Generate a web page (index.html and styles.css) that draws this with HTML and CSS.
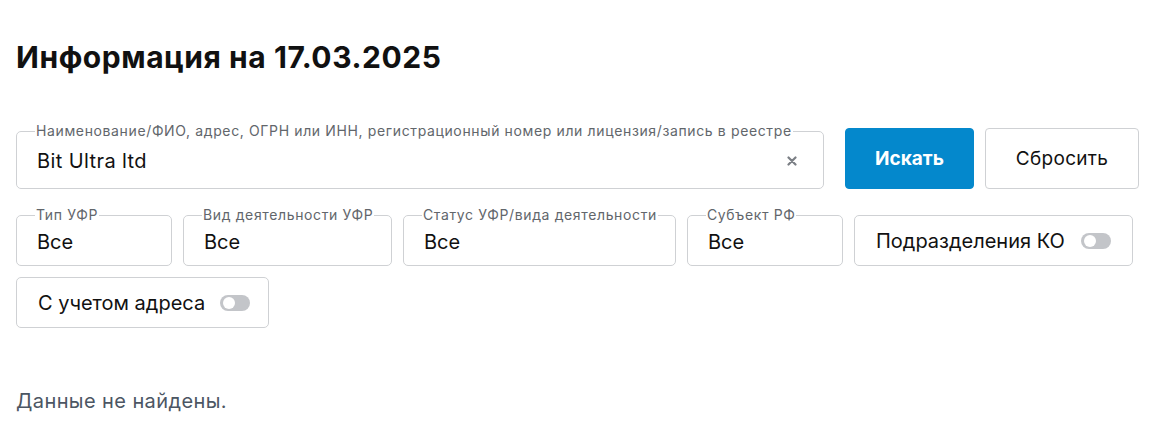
FILE: index.html
```html
<!DOCTYPE html>
<html lang="ru">
<head>
<meta charset="utf-8">
<link rel="stylesheet" href="styles.css">
</head>
<body>
<main class="page">
  <h1 class="title">Информация на 17.03.2025</h1>
  <form class="search">
    <div class="search-row">
      <fieldset class="field field-main">
        <legend>Наименование/ФИО, адрес, ОГРН или ИНН, регистрационный номер или лицензия/запись в реестре</legend>
        <span class="value value-latin">Bit Ultra ltd</span>
        <span class="clear"><svg width="10" height="10" viewBox="0 0 10 10"><path d="M1.5 1.5 L8.5 8.5 M8.5 1.5 L1.5 8.5" stroke="#7b7f85" stroke-width="2.2" stroke-linecap="round"/></svg></span>
      </fieldset>
      <button type="button" class="btn btn-primary">Искать</button>
      <button type="button" class="btn btn-secondary">Сбросить</button>
    </div>
    <div class="filters">
      <fieldset class="field f-type"><legend>Тип УФР</legend><span class="value">Все</span></fieldset>
      <fieldset class="field f-activity"><legend>Вид деятельности УФР</legend><span class="value">Все</span></fieldset>
      <fieldset class="field f-status"><legend>Статус УФР/вида деятельности</legend><span class="value">Все</span></fieldset>
      <fieldset class="field f-region"><legend>Субъект РФ</legend><span class="value">Все</span></fieldset>
      <div class="switch-box f-ko"><span class="value">Подразделения КО</span><span class="toggle"></span></div>
      <div class="switch-box f-addr"><span class="value">С учетом адреса</span><span class="toggle"></span></div>
    </div>
  </form>
  <p class="empty">Данные не найдены.</p>
</main>
</body>
</html>
```
FILE: styles.css
```css
* { box-sizing: border-box; }
html, body { margin: 0; background: #fff; }
body {
  font-family: Inter, "Noto Sans", "Liberation Sans", sans-serif;
  color: #111;
}
.page { padding: 0 25px 0 16px; width: 1164px; }
.title {
  margin: 0;
  padding-top: 38px;
  font-size: 30px;
  line-height: 38px;
  font-weight: 700;
  letter-spacing: 0.55px;
  color: #111;
}
.search { margin-top: 48px; }
.search-row {
  display: flex;
  align-items: flex-end;
}
.field {
  margin: 0;
  border: 1px solid #cfd1d4;
  border-radius: 5px;
  padding: 0 20px 0 20px;
  display: flex;
  align-items: center;
  min-width: 0;
}
.field legend {
  font-size: 14px;
  line-height: 14px;
  letter-spacing: 0.63px;
  color: #62666b;
  padding: 0 1px;
  margin-left: -2px;
  white-space: nowrap;
}
.value {
  font-size: 20px;
  letter-spacing: 0;
  color: #111;
  white-space: nowrap;
}
.value-latin { letter-spacing: 0.4px; }
.field-main {
  flex: 1;
  height: 65px;
  padding-bottom: 5px;
}
.field-main .value { flex: 1; }
.clear { display: flex; margin-right: 6px; margin-top: 1px; }
.btn {
  height: 61px;
  border-radius: 4px;
  font-family: inherit;
  font-size: 19px;
  padding: 0;
  cursor: pointer;
}
.btn-primary {
  width: 129px;
  margin-left: 21px;
  background: #0488cc;
  border: 1px solid #0488cc;
  color: #fff;
  font-weight: 700;
}
.btn-secondary {
  width: 154px;
  margin-left: 11px;
  background: #fff;
  border: 1px solid #cfd1d4;
  color: #111;
  letter-spacing: 0.3px;
}
.filters {
  display: flex;
  flex-wrap: wrap;
  gap: 11px;
  margin-top: 19px;
  width: 1123px;
  align-items: flex-end;
}
.filters .field { height: 58px; padding-bottom: 4px; }
.f-type { width: 156px; }
.f-activity { width: 209px; }
.f-status { width: 273px; }
.f-region { width: 156px; }
.switch-box {
  height: 51px;
  border: 1px solid #cfd1d4;
  border-radius: 5px;
  display: flex;
  align-items: center;
  justify-content: space-between;
  padding: 0 21px 0 21px;
}
.f-ko { width: 279px; }
.f-addr { width: 253px; justify-content: flex-start; gap: 15px; }
.toggle {
  width: 30px;
  height: 16px;
  border-radius: 8px;
  background: #c3c5c9;
  position: relative;
  flex: none;
}
.toggle::after {
  content: "";
  position: absolute;
  left: 3px;
  top: 2px;
  width: 12px;
  height: 12px;
  border-radius: 50%;
  background: #fff;
}
.empty {
  margin: 61px 0 0;
  font-size: 20px;
  letter-spacing: 0.4px;
  color: #4c5663;
}
```
